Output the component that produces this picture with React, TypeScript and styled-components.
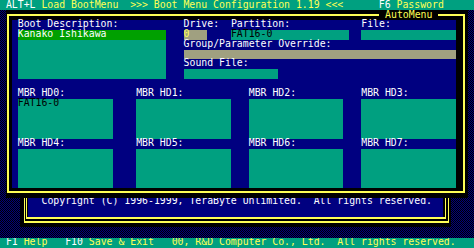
import React from "react";
import styled, { createGlobalStyle } from "styled-components";

const CW = 474 / 80; // character cell width
const RH = 248 / 25; // character cell height

const PAL = {
  teal: "#00a080",
  green: "#00a000",
  khaki: "#a0a080",
  navy: "#000080",
  yellow: "#ffff55",
  white: "#ffffff",
  black: "#000000",
};

const Global = createGlobalStyle`
  html, body { margin: 0; padding: 0; background: #000; }
  body { width: 474px; height: 248px; overflow: hidden; }
`;

const Screen = styled.div`
  width: 474px;
  height: 248px;
  display: flex;
  flex-direction: column;
  font-family: "DejaVu Sans Mono", "Liberation Mono", monospace;
  font-size: 9.84px;
  color: ${PAL.white};
  white-space: pre;
`;

const Bar = styled.div<{ $lh: number }>`
  flex: none;
  height: ${RH}px;
  background: ${PAL.teal};
  line-height: ${(p) => p.$lh}px;
`;

const Key = styled.span`
  color: ${PAL.white};
`;

const Hint = styled.span`
  color: ${PAL.yellow};
`;

const Desktop = styled.div`
  flex: 1;
  position: relative;
  background: repeating-conic-gradient(${PAL.navy} 0 25%, ${PAL.black} 0 50%) 0 0 / 2px 2px;
`;

const MainWindow = styled.div`
  position: absolute;
  left: ${CW}px;
  top: 0;
  width: ${78 * CW}px;
  height: ${19 * RH}px;
  box-sizing: border-box;
  padding: ${RH}px ${2 * CW}px ${RH}px ${CW}px;
  background: ${PAL.black};
  z-index: 2;
  &::before {
    content: "";
    position: absolute;
    left: 1px;
    top: 4px;
    right: 3px;
    bottom: 5px;
    border: 2px solid ${PAL.yellow};
  }
`;

const Title = styled.span`
  position: absolute;
  top: 0;
  left: ${63 * CW}px;
  height: ${RH}px;
  padding: 0 ${CW}px;
  line-height: ${RH}px;
  background: ${PAL.black};
  color: ${PAL.yellow};
`;

const Panel = styled.div`
  position: relative;
  display: grid;
  grid-template-columns: repeat(75, ${CW}px);
  grid-template-rows: repeat(17, ${RH}px);
  background: ${PAL.navy};
  line-height: 8px;
`;

type Cell = { $col: number; $row: number; $span?: number; $rows?: number };

const Label = styled.div<Cell>`
  grid-column: ${(p) => p.$col + 1} / span ${(p) => p.$span ?? 30};
  grid-row: ${(p) => p.$row + 1};
  color: ${PAL.white};
`;

const Field = styled.div<Cell & { $tone: "teal" | "khaki"; $ink?: string }>`
  grid-column: ${(p) => p.$col + 1} / span ${(p) => p.$span ?? 1};
  grid-row: ${(p) => p.$row + 1} / span ${(p) => p.$rows ?? 1};
  background: ${(p) => (p.$tone === "teal" ? PAL.teal : PAL.khaki)};
  color: ${(p) => p.$ink ?? PAL.black};
`;

const ListItem = styled.div<{ $selected?: boolean }>`
  height: ${RH}px;
  background: ${(p) => (p.$selected ? PAL.green : "transparent")};
  color: ${PAL.white};
`;

const CopyWindow = styled.div`
  position: absolute;
  left: 20px;
  width: 431px;
  top: 150px;
  height: 67px;
  box-sizing: border-box;
  padding: 0 7.7px 10px 8.3px;
  background: ${PAL.black};
  display: flex;
  flex-direction: column;
  justify-content: flex-end;
  z-index: 1;
  &::before,
  &::after {
    content: "";
    position: absolute;
    top: -4px;
    border-style: solid;
    border-color: ${PAL.yellow};
    border-width: 0 1px 2px 1px;
  }
  &::before {
    left: 4px;
    right: 2px;
    bottom: 4px;
  }
  &::after {
    left: 6px;
    right: 5px;
    bottom: 8px;
  }
`;

const CopyBody = styled.div`
  position: relative;
  z-index: 1;
  background: ${PAL.navy};
  height: ${2 * RH}px;
  padding-left: 13.2px;
  line-height: 8.4px;
  color: ${PAL.white};
`;

const mbr = [
  { name: "MBR HD0:", col: 1, row: 7, value: "FAT16-0" },
  { name: "MBR HD1:", col: 21, row: 7 },
  { name: "MBR HD2:", col: 40, row: 7 },
  { name: "MBR HD3:", col: 59, row: 7 },
  { name: "MBR HD4:", col: 1, row: 12 },
  { name: "MBR HD5:", col: 21, row: 12 },
  { name: "MBR HD6:", col: 40, row: 12 },
  { name: "MBR HD7:", col: 59, row: 12 },
];

export default function App() {
  return (
    <>
      <Global />
      <Screen>
        <Bar $lh={9.6}>
          {" "}
          <Key>ALT+L</Key> <Hint>Load BootMenu</Hint>
          {"  "}
          <Hint>{">>> Boot Menu Configuration 1.19 <<<"}</Hint>
          {"      "}
          <Key>F6</Key> <Hint>Password</Hint>
        </Bar>
        <Desktop>
          <MainWindow>
            <Title>AutoMenu</Title>
            <Panel>
              <Label $col={1} $row={0}>Boot Description:</Label>
              <Field $col={1} $row={1} $span={25} $rows={5} $tone="teal">
                <ListItem $selected>Kanako Ishikawa</ListItem>
              </Field>

              <Label $col={29} $row={0} $span={8}>Drive:</Label>
              <Label $col={37} $row={0} $span={20}>Partition:</Label>
              <Label $col={59} $row={0} $span={16}>File:</Label>
              <Field $col={29} $row={1} $span={4} $tone="khaki" $ink={PAL.yellow}>0</Field>
              <Field $col={37} $row={1} $span={20} $tone="teal">FAT16-0</Field>
              <Field $col={59} $row={1} $span={16} $tone="teal" />

              <Label $col={29} $row={2} $span={46}>Group/Parameter Override:</Label>
              <Field $col={29} $row={3} $span={46} $tone="khaki" />

              <Label $col={29} $row={4} $span={20}>Sound File:</Label>
              <Field $col={29} $row={5} $span={16} $tone="teal" />

              {mbr.map((m) => (
                <React.Fragment key={m.name}>
                  <Label $col={m.col} $row={m.row} $span={16}>{m.name}</Label>
                  <Field $col={m.col} $row={m.row + 1} $span={16} $rows={4} $tone="teal">
                    {m.value ?? ""}
                  </Field>
                </React.Fragment>
              ))}
            </Panel>
          </MainWindow>
          <CopyWindow>
            <CopyBody>Copyright (C) 1996-1999, TeraByte Unlimited.  All rights reserved.</CopyBody>
          </CopyWindow>
        </Desktop>
        <Bar $lh={7.4}>
          {" "}
          <Key>F1</Key> <Hint>Help</Hint>
          {"   "}
          <Key>F10</Key> <Hint>Save &amp; Exit</Hint>
          {"   "}
          <Hint>00, R&amp;D Computer Co., Ltd.  All rights reserved.</Hint>
        </Bar>
      </Screen>
    </>
  );
}
